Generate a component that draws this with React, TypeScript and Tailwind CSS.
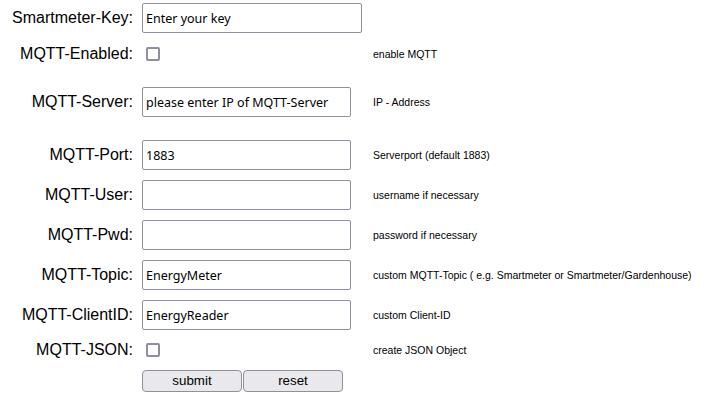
import React from 'react';

type Row = {
  label: string;
  kind: 'text' | 'check';
  value?: string;
  hint?: string;
  wide?: boolean;
  top: string;
};

const rows: Row[] = [
  { label: 'Smartmeter-Key:', kind: 'text', value: 'Enter your key', wide: true, top: 'mt-[3px]' },
  { label: 'MQTT-Enabled:', kind: 'check', hint: 'enable MQTT', top: 'mt-[6px]' },
  { label: 'MQTT-Server:', kind: 'text', value: 'please enter IP of MQTT-Server', hint: 'IP - Address', top: 'mt-[18px]' },
  { label: 'MQTT-Port:', kind: 'text', value: '1883', hint: 'Serverport (default 1883)', top: 'mt-[23px]' },
  { label: 'MQTT-User:', kind: 'text', value: '', hint: 'username if necessary', top: 'mt-[10px]' },
  { label: 'MQTT-Pwd:', kind: 'text', value: '', hint: 'password if necessary', top: 'mt-[10px]' },
  { label: 'MQTT-Topic:', kind: 'text', value: 'EnergyMeter', hint: 'custom MQTT-Topic ( e.g. Smartmeter or Smartmeter/Gardenhouse)', top: 'mt-[10px]' },
  { label: 'MQTT-ClientID:', kind: 'text', value: 'EnergyReader', hint: 'custom Client-ID', top: 'mt-[10px]' },
  { label: 'MQTT-JSON:', kind: 'check', hint: 'create JSON Object', top: 'mt-[5px]' },
];

export default function App() {
  return (
    <div className="w-[708px] h-[411px] bg-white text-black font-['Liberation_Sans',Arial,sans-serif] overflow-hidden">
      {rows.map((r) => (
        <div key={r.label} className={`flex items-center h-[30px] ${r.top}`}>
          <div className="w-[133px] text-right text-[16px] leading-none">{r.label}</div>
          <div className="w-[240px] pl-[9px] flex items-center">
            {r.kind === 'text' ? (
              <input
                readOnly
                defaultValue={r.value}
                className={`${r.wide ? 'w-[220px]' : 'w-[209px]'} h-[30px] border border-[#8f8f9d] rounded-[2px] px-[3px] text-[12.5px] text-black font-['Noto_Sans',sans-serif] outline-none`}
              />
            ) : (
              <span className="ml-[4px] w-[14px] h-[14px] border-2 border-[#8f8f9d] rounded-[2px] bg-white" />
            )}
          </div>
          {r.hint && <div className="text-[10.5px] leading-none">{r.hint}</div>}
        </div>
      ))}
      <div className="flex mt-[5px] pl-[142px] gap-[1px]">
        <button className="w-[100px] h-[22px] bg-[#e9e9ed] border border-[#8f8f9d] rounded-[4px] text-[13.33px] leading-none">
          submit
        </button>
        <button className="w-[100px] h-[22px] bg-[#e9e9ed] border border-[#8f8f9d] rounded-[4px] text-[13.33px] leading-none">
          reset
        </button>
      </div>
    </div>
  );
}
